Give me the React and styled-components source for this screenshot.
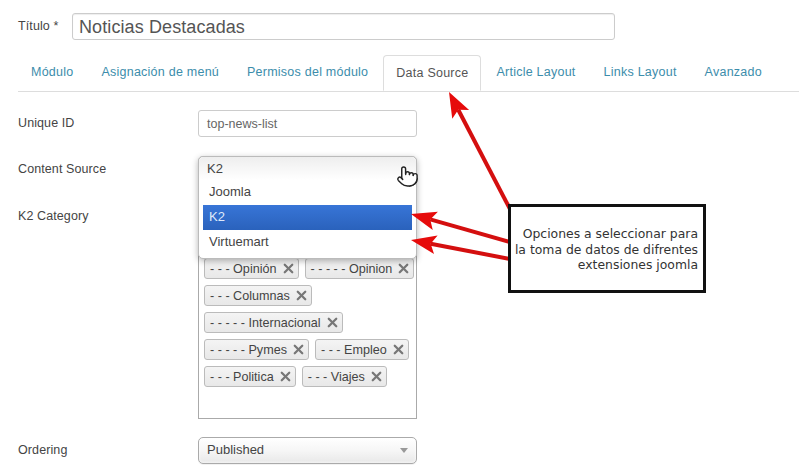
import React from 'react'
import styled, { createGlobalStyle } from 'styled-components'
import { Pointer, X } from 'lucide-react'

const GlobalStyle = createGlobalStyle`
  html, body { margin: 0; padding: 0; background: #fff; }
  body { font-family: "Liberation Sans", Arial, sans-serif; font-size: 12.5px; color: #444; }
`

const Page = styled.div`
  position: relative;
  width: 799px;
  height: 470px;
  overflow: hidden;
  padding: 13px 0 0 18px;
  box-sizing: border-box;
`

const TitleRow = styled.div`
  display: flex;
  align-items: center;
`

const TitleLabel = styled.label`
  width: 54px;
  margin-top: -1px;
  font-size: 12.5px;
  letter-spacing: 0.1px;
`

const TitleInput = styled.div`
  width: 543px;
  height: 27px;
  box-sizing: border-box;
  border: 1px solid #ccc;
  border-radius: 3px;
  padding-left: 6px;
  font-size: 18px;
  line-height: 26px;
  letter-spacing: 0.1px;
  color: #555;
  box-shadow: inset 0 1px 1px rgba(0, 0, 0, 0.07);
`

const Tabs = styled.div`
  display: flex;
  height: 36px;
  margin-top: 15px;
  border-bottom: 1px solid #ddd;
`

const Tab = styled.div`
  height: ${p => (p.$active ? '36px' : '35px')};
  box-sizing: border-box;
  margin-right: 2px;
  padding: 0 ${p => p.$pad || 13}px;
  font-size: 12.5px;
  line-height: 35px;
  letter-spacing: 0.24px;
  color: ${p => (p.$active ? '#555' : '#3c8dab')};
  background: #fff;
  ${p => p.$active && `
    border: 1px solid #ddd;
    border-bottom-color: #fff;
    border-radius: 4px 4px 0 0;
  `}
`

const Form = styled.div`
  display: flex;
  flex-direction: column;
  margin-top: 18px;
`

const Row = styled.div`
  display: flex;
  align-items: flex-start;
  margin-bottom: ${p => p.$gap || 0}px;
`

const Label = styled.label`
  width: 180px;
  flex: none;
  line-height: 27px;
  font-size: 12.5px;
  letter-spacing: 0.1px;
`

const TextInput = styled.div`
  width: 219px;
  height: 27px;
  box-sizing: border-box;
  border: 1px solid #ccc;
  border-radius: 3px;
  padding-left: 8px;
  line-height: 26px;
  font-size: 12.5px;
  color: #666;
`

const Field = styled.div`
  position: relative;
  width: 219px;
`

const SelectBase = styled.div`
  position: relative;
  width: 219px;
  height: 27px;
  box-sizing: border-box;
  border: 1px solid #aaa;
  border-radius: 5px;
  padding-left: 8px;
  line-height: 24px;
  font-size: 13px;
  color: #444;
  background: linear-gradient(#fff 0%, #f6f6f6 50%, #e8e8e8 100%);
  box-shadow: inset 0 0 3px #fff, 0 1px 0 rgba(0, 0, 0, 0.05);
`

const Caret = styled.span`
  position: absolute;
  right: 8px;
  top: 10px;
  border-left: 4px solid transparent;
  border-right: 4px solid transparent;
  border-top: 5px solid #999;
`

const Dropdown = styled.div`
  position: absolute;
  z-index: 2;
  top: 0;
  left: 0;
  width: 219px;
  height: 103px;
  box-sizing: border-box;
  border: 1px solid #bbb;
  border-radius: 5px;
  background: #fff;
  box-shadow: 0 2px 6px rgba(0, 0, 0, 0.3);
`

const DropdownHead = styled.div`
  height: 23px;
  padding-left: 8px;
  line-height: 23px;
  font-size: 13px;
  color: #444;
  border-radius: 5px 5px 0 0;
  background: linear-gradient(#eee, #fff);
`

const Options = styled.div`
  padding: 0 4px;
`

const Option = styled.div`
  height: 25px;
  padding-left: 6px;
  line-height: 23px;
  font-size: 13px;
  color: ${p => (p.$selected ? '#dfe9fa' : '#444')};
  background: ${p => (p.$selected ? 'linear-gradient(#3875d7, #2a62bc)' : 'transparent')};
`

const Hand = styled(Pointer)`
  position: absolute;
  z-index: 3;
  top: 9px;
  right: -2px;
  fill: #fff;
  color: #222;
`

const TagBox = styled.div`
  width: 219px;
  height: 216px;
  box-sizing: border-box;
  border: 1px solid #aaa;
  padding: 54px 0 0 5px;
  display: flex;
  flex-wrap: wrap;
  align-content: flex-start;
  column-gap: 6px;
  row-gap: 6px;
`

const Tag = styled.div`
  display: flex;
  align-items: center;
  height: 21px;
  box-sizing: border-box;
  padding: 0 2px 0 5px;
  border: 1px solid #bbb;
  border-radius: 3px;
  font-size: 12.6px;
  color: #444;
  white-space: nowrap;
  background: linear-gradient(#f4f4f4, #e8e8e8);
`

const TagClose = styled(X)`
  margin-left: 4px;
  color: #777;
`

const Annotations = styled.svg`
  position: absolute;
  z-index: 3;
  top: 0;
  left: 0;
  pointer-events: none;
`

const Callout = styled.div`
  position: absolute;
  z-index: 4;
  left: 508px;
  top: 204px;
  width: 198px;
  height: 89px;
  box-sizing: border-box;
  border: 3px solid #111;
  background: #fff;
  padding: 19px 5px 0 0;
  text-align: right;
  font-family: "DejaVu Sans", Verdana, sans-serif;
  font-size: 12.4px;
  line-height: 15.5px;
  color: #333;
`

const tags = [
  '- - - Opinión',
  '- - - - - Opinion',
  '- - - Columnas',
  '- - - - - Internacional',
  '- - - - - Pymes',
  '- - - Empleo',
  '- - - Politica',
  '- - - Viajes',
]

const tabs = [
  { name: 'Módulo' },
  { name: 'Asignación de menú' },
  { name: 'Permisos del módulo' },
  { name: 'Data Source', active: true },
  { name: 'Article Layout' },
  { name: 'Links Layout' },
  { name: 'Avanzado' },
]

const Arrow = ({ x1, y1, x2, y2 }) => {
  const angle = Math.atan2(y2 - y1, x2 - x1)
  const len = 27
  const spread = 0.36
  const a = [x2 - len * Math.cos(angle - spread), y2 - len * Math.sin(angle - spread)]
  const b = [x2 - len * Math.cos(angle + spread), y2 - len * Math.sin(angle + spread)]
  const neck = [x2 - 20 * Math.cos(angle), y2 - 20 * Math.sin(angle)]
  return (
    <g>
      <line x1={x1} y1={y1} x2={neck[0]} y2={neck[1]} stroke="#d40f0f" strokeWidth="4" />
      <polygon points={`${x2},${y2} ${a[0]},${a[1]} ${neck[0]},${neck[1]} ${b[0]},${b[1]}`} fill="#e60b0b" />
    </g>
  )
}

export default function App() {
  return (
    <Page>
      <GlobalStyle />
      <TitleRow>
        <TitleLabel>Título *</TitleLabel>
        <TitleInput>Noticias Destacadas</TitleInput>
      </TitleRow>
      <Tabs>
        {tabs.map(t => (
          <Tab key={t.name} $active={t.active} $pad={t.active ? 12 : 13}>{t.name}</Tab>
        ))}
      </Tabs>
      <Form>
        <Row $gap={19}>
          <Label>Unique ID</Label>
          <TextInput>top-news-list</TextInput>
        </Row>
        <Row $gap={20}>
          <Label>Content Source</Label>
          <Field>
            <SelectBase>K2</SelectBase>
            <Dropdown>
              <DropdownHead>K2</DropdownHead>
              <Options>
                <Option>Joomla</Option>
                <Option $selected>K2</Option>
                <Option>Virtuemart</Option>
              </Options>
            </Dropdown>
            <Hand size={23} strokeWidth={1.5} />
          </Field>
        </Row>
        <Row $gap={18}>
          <Label>K2 Category</Label>
          <TagBox>
            {tags.map(t => (
              <Tag key={t}>{t}<TagClose size={15} strokeWidth={3.6} /></Tag>
            ))}
          </TagBox>
        </Row>
        <Row>
          <Label>Ordering</Label>
          <SelectBase>Published<Caret /></SelectBase>
        </Row>
      </Form>
      <Annotations width="799" height="470">
        <Arrow x1={510} y1={209} x2={449} y2={92} />
        <Arrow x1={510} y1={242} x2={411} y2={214} />
        <Arrow x1={510} y1={259} x2={411} y2={240} />
      </Annotations>
      <Callout>
        Opciones a seleccionar para<br />
        la toma de datos de difrentes<br />
        extensiones joomla
      </Callout>
    </Page>
  )
}
